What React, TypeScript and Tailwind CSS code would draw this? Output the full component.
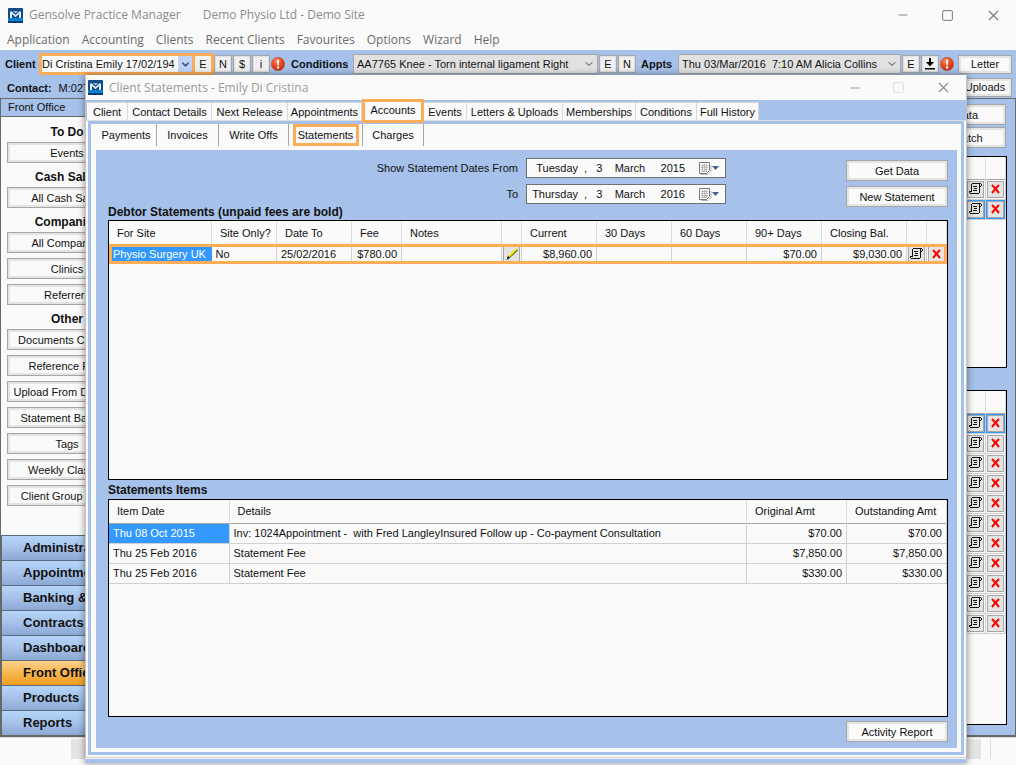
import React from "react";
import { Minus, Square, X, ChevronDown } from "lucide-react";

const Logo = () => (
  <svg width="15" height="15" viewBox="0 0 15 15" className="shrink-0" aria-hidden="true">
    <rect width="15" height="15" rx="1" fill="#0f4c86" />
    <rect y="10" width="15" height="5" rx="1" fill="#0a7fd0" />
    <rect y="13" width="15" height="2" fill="#083a70" />
    <path d="M2 10V4.5Q2 3 3.5 3.2L7.5 7l4-3.8Q13 3 13 4.5V10h-2V6L7.5 9.2 4 6v4z" fill="#e0effa" />
    <path d="M5 3h5L7.5 5.6z" fill="#8fc3e8" />
  </svg>
);

const Alert = () => (
  <svg width="14" height="14" viewBox="0 0 14 14" className="shrink-0" aria-hidden="true">
    <defs>
      <radialGradient id="alertFill" cx="0.4" cy="0.3" r="0.8">
        <stop offset="0" stopColor="#ff8a5c" />
        <stop offset="0.5" stopColor="#e8451c" />
        <stop offset="1" stopColor="#b82508" />
      </radialGradient>
    </defs>
    <circle cx="7" cy="7" r="6.7" fill="url(#alertFill)" stroke="#b9624a" strokeWidth="0.6" />
    <path d="M6 2.5h2.2L7.8 8.3H6.4z" fill="#fff" />
    <circle cx="7.1" cy="10.5" r="1.2" fill="#fff" />
  </svg>
);

const ScrollIcon = () => (
  <svg width="13" height="12" viewBox="0 0 13 12" className="shrink-0" shapeRendering="crispEdges" aria-hidden="true">
    <path
      d="M3 0h9v1h-9zM2 1h1v7h-1zM12 1h1v2h-1zM10 1h1v9h-1zM11 3h1v1h-1zM0 8h3v1h-3zM0 9h1v1h-1zM1 10h9v1h-9zM4 3h4v1h-4zM5 5h3v1h-3zM4 7h4v1h-4z"
      fill="#111"
    />
  </svg>
);

const RedX = () => (
  <svg width="9" height="10" viewBox="0 0 9 10" aria-hidden="true">
    <path d="M1 1l3.5 3.7L8 1M1 9l3.5-4.3L8 9" fill="none" stroke="#f00" strokeWidth="2" />
  </svg>
);

const Pencil = () => (
  <svg width="12" height="12" viewBox="0 0 12 12" aria-hidden="true">
    <path d="M1.5 10.5L11 1.5" stroke="#222" strokeWidth="2.4" />
    <path d="M3 8.5L10.5 1" stroke="#f4f000" strokeWidth="2" />
    <path d="M0.5 11.5l2-1" stroke="#222" strokeWidth="1" />
  </svg>
);

const Calendar = () => (
  <svg width="20" height="13" viewBox="0 0 20 13" aria-hidden="true">
    <path d="M2 12.5h7l3-3V3" fill="none" stroke="#b5b5b5" strokeWidth="1" />
    <path d="M.5.5h10v8l-3 3h-7z" fill="#fff" stroke="#777" strokeWidth="1" />
    <path d="M2 3.5h7M2 5.5h7M2 7.5h7M2 9.5h5M3.5 2v8M5.5 2v8M7.5 2v8" stroke="#b9b9b9" strokeWidth="1" />
    <path d="M13 4h7l-3.5 4z" fill="#43618f" />
  </svg>
);

function Btn({ children, className = "" }: { children: React.ReactNode; className?: string }) {
  return (
    <button
      className={`shrink-0 overflow-hidden whitespace-nowrap border border-[#a6a6a6] bg-[#fafafa] text-center text-[11px] leading-3 shadow-[inset_0_0_0_2px_#e4e4e4] ${className}`}
    >
      {children}
    </button>
  );
}

function Mini({ children, label }: { children: React.ReactNode; label?: string }) {
  return (
    <button
      aria-label={label}
      className="flex h-[18px] w-[18px] shrink-0 items-center justify-center border border-[#a6a6a6] bg-[#f0f0f0] text-[11px] shadow-[inset_0_0_0_1px_#e0e0e0]"
    >
      {children}
    </button>
  );
}

function IconButton({ children, label }: { children: React.ReactNode; label: string }) {
  return (
    <button
      aria-label={label}
      className="mx-auto flex h-[17px] w-[17px] items-center justify-center border border-[#a6a6a6] bg-[#e4e4e4]"
    >
      {children}
    </button>
  );
}

function GreySelect({ id, value, className }: { id: string; value: string; className: string }) {
  return (
    <div className={`relative h-5 ${className}`}>
      <select
        id={id}
        className="h-full w-full appearance-none border border-[#a6a6a6] bg-[#e1e1e1] pl-[3px] text-[11px] outline-none"
      >
        <option>{value}</option>
      </select>
      <ChevronDown size={12} strokeWidth={2} className="pointer-events-none absolute right-[3px] top-1 text-[#444]" />
    </div>
  );
}

const sideGroups = [
  { title: "To Do", items: ["Events"] },
  { title: "Cash Sales", items: ["All Cash Sales"] },
  { title: "Companies", items: ["All Companies", "Clinics", "Referrers"] },
  {
    title: "Other",
    items: [
      "Documents Created",
      "Reference Files",
      "Upload From Desktop",
      "Statement Batches",
      "Tags",
      "Weekly Classes",
      "Client Group Class",
    ],
  },
];

const sections = [
  "Administration",
  "Appointments",
  "Banking & Fees",
  "Contracts",
  "Dashboards",
  "Front Office",
  "Products",
  "Reports",
];

function SideGrid({ rows, selected, className }: { rows: number; selected: number; className: string }) {
  return (
    <div className={`ml-auto mr-2 w-[140px] border border-black bg-[#fafafa] ${className}`}>
      <table className="w-full table-fixed border-collapse">
        <colgroup>
          <col />
          <col className="w-5" />
          <col className="w-5" />
        </colgroup>
        <thead>
          <tr className="h-[22px] border-b border-[#a6a6a6]">
            <th />
            <th className="border-r border-[#dcdcdc]" />
            <th className="border-r border-[#dcdcdc]" />
          </tr>
        </thead>
        <tbody>
          {Array.from({ length: rows }, (_, i) => (
            <tr key={i} className="h-5 border-b border-[#d0d0d0]">
              <td />
              <td className={`border-r border-[#d0d0d0] p-0 ${i === selected ? "bg-[#3399ff]" : ""}`}>
                <IconButton label="View">
                  <ScrollIcon />
                </IconButton>
              </td>
              <td className={`border-r border-[#d0d0d0] p-0 ${i === selected ? "bg-[#3399ff]" : ""}`}>
                <IconButton label="Delete">
                  <RedX />
                </IconButton>
              </td>
            </tr>
          ))}
        </tbody>
      </table>
    </div>
  );
}

const tabs = [
  { name: "Client", w: "w-[41px]" },
  { name: "Contact Details", w: "w-[84px]" },
  { name: "Next Release", w: "w-[76px]" },
  { name: "Appointments", w: "w-[74px]" },
  { name: "Accounts", w: "w-[62px]" },
  { name: "Events", w: "w-[43px]" },
  { name: "Letters & Uploads", w: "w-[96px]" },
  { name: "Memberships", w: "w-[73px]" },
  { name: "Conditions", w: "w-[61px]" },
  { name: "Full History", w: "w-[62px]" },
];

const subTabs = [
  { name: "Payments", w: "w-[61px]" },
  { name: "Invoices", w: "w-[62px]" },
  { name: "Write Offs", w: "w-[70px]" },
  { name: "Statements", w: "w-[74px]" },
  { name: "Charges", w: "w-[61px]" },
];

const items = [
  ["Thu 08 Oct 2015", "Inv: 1024Appointment -  with Fred LangleyInsured Follow up - Co-payment Consultation", "$70.00", "$70.00"],
  ["Thu 25 Feb 2016", "Statement Fee", "$7,850.00", "$7,850.00"],
  ["Thu 25 Feb 2016", "Statement Fee", "$330.00", "$330.00"],
];

function DateField({ id, label, value }: { id: string; label: string; value: string }) {
  return (
    <div className="flex items-center justify-end gap-2">
      <label htmlFor={id}>{label}</label>
      <div className="flex h-5 w-[200px] items-center border border-[#707070] bg-[#fafafa] pr-[6px]">
        <input id={id} defaultValue={value} className="w-[158px] bg-transparent text-right text-[11px] outline-none" />
        <button aria-label="Open calendar" className="ml-auto">
          <Calendar />
        </button>
      </div>
    </div>
  );
}

const headCell = "border-r border-[#dcdcdc] pl-2 text-left font-normal";
const cell = "border-r border-[#d0d0d0] px-1";

function StatementsDialog() {
  return (
    <section className="absolute bottom-[2px] left-[85px] right-[49px] top-[75px] flex flex-col border-l border-r border-[#c4c4c4] bg-[#fafafa] shadow-[0_0_7px_rgba(0,0,0,0.45)]">
      <header className="flex h-[25px] shrink-0 items-center pl-[2px] pr-[14px] font-['Open_Sans',sans-serif] text-[12px] text-[#9a9a9a]">
        <Logo />
        <h2 className="pl-1.5">Client Statements - Emily Di Cristina</h2>
        <div className="ml-auto flex items-center gap-[30px] text-[#888]">
          <button aria-label="Minimise"><Minus size={14} strokeWidth={1.5} /></button>
          <button aria-label="Maximise" className="text-[#ddd]"><Square size={13} strokeWidth={1.8} /></button>
          <button aria-label="Close"><X size={17} strokeWidth={1.5} /></button>
        </div>
      </header>
      <nav className="flex h-5 shrink-0 items-end bg-[#a6c1ea] pl-px">
        {tabs.map((t) =>
          t.name === "Accounts" ? (
            <button
              key={t.name}
              className={`relative z-10 -mb-[3px] h-6 shrink-0 whitespace-nowrap border-[3px] border-[#fdac58] bg-[#fafafa] pb-0.5 ${t.w}`}
            >
              {t.name}
            </button>
          ) : (
            <button key={t.name} className={`h-[18px] shrink-0 whitespace-nowrap border-r border-t border-[#d8d8d8] bg-[#fafafa] ${t.w}`}>
              {t.name}
            </button>
          ),
        )}
      </nav>
      <div className="flex flex-1 flex-col border-t border-[#dcdcdc] px-[2px] pb-[2px]">
        <div className="flex flex-1 flex-col border-[3px] border-[#a6c1ea] pb-1 pl-[5px] pr-1">
          <nav className="flex h-[22px] shrink-0">
            {subTabs.map((t) => (
              <div key={t.name} className={`flex h-[22px] shrink-0 items-center justify-center border-r border-[#a6a6a6] ${t.w}`}>
                <button
                  className={
                    t.name === "Statements"
                      ? "h-[22px] w-[66px] whitespace-nowrap border-[3px] border-[#fdac58]"
                      : "whitespace-nowrap"
                  }
                >
                  {t.name}
                </button>
              </div>
            ))}
          </nav>
          <div className="mt-1 flex flex-1 flex-col bg-[#a6c1ea] pb-[6px] pl-3 pr-[9px] pt-2">
            <div className="flex justify-end">
              <div className="flex flex-col gap-1.5">
                <DateField id="from" label="Show Statement Dates From" value="Tuesday  ,   3    March     2015" />
                <DateField id="to" label="To" value="Thursday  ,   3    March     2016" />
              </div>
              <div className="ml-[120px] mt-0.5 flex flex-col gap-[5px]">
                <Btn className="h-[21px] w-[102px]">Get Data</Btn>
                <Btn className="h-[21px] w-[102px]">New Statement</Btn>
              </div>
            </div>
            <h3 className="mt-[-1px] h-[14px] text-[12px] font-bold leading-3">Debtor Statements (unpaid fees are bold)</h3>
            <div className="h-[260px] border border-black bg-[#fafafa]">
              <table className="w-full table-fixed border-collapse whitespace-nowrap">
                <colgroup>
                  <col />
                  <col className="w-[65px]" />
                  <col className="w-[75px]" />
                  <col className="w-[50px]" />
                  <col className="w-[100px]" />
                  <col className="w-5" />
                  <col className="w-[75px]" />
                  <col className="w-[75px]" />
                  <col className="w-[75px]" />
                  <col className="w-[75px]" />
                  <col className="w-[85px]" />
                  <col className="w-5" />
                  <col className="w-5" />
                </colgroup>
                <thead>
                  <tr className="h-[23px]">
                    {["For Site", "Site Only?", "Date To", "Fee", "Notes", "", "Current", "30 Days", "60 Days", "90+ Days", "Closing Bal.", "", ""].map(
                      (h, i) => (
                        <th key={i} className={`${headCell} pr-0`}>{h}</th>
                      ),
                    )}
                  </tr>
                </thead>
                <tbody>
                  <tr className="h-5 outline-3 -outline-offset-3 outline-[#fdac58]">
                    <td className="bg-[#3399ff] bg-clip-padding px-1 text-white">Physio Surgery UK</td>
                    <td className={cell}>No</td>
                    <td className={cell}>25/02/2016</td>
                    <td className={`${cell} text-right`}>$780.00</td>
                    <td className={cell} />
                    <td className="border-r border-[#d0d0d0] p-0">
                      <IconButton label="Edit note"><Pencil /></IconButton>
                    </td>
                    <td className={`${cell} text-right`}>$8,960.00</td>
                    <td className={cell} />
                    <td className={cell} />
                    <td className={`${cell} text-right`}>$70.00</td>
                    <td className={`${cell} text-right`}>$9,030.00</td>
                    <td className="border-r border-[#d0d0d0] p-0">
                      <IconButton label="View"><ScrollIcon /></IconButton>
                    </td>
                    <td className="p-0">
                      <IconButton label="Delete"><RedX /></IconButton>
                    </td>
                  </tr>
                </tbody>
              </table>
            </div>
            <h3 className="h-[19px] pt-[3px] text-[12px] font-bold leading-[14px]">Statements Items</h3>
            <div className="flex-1 border border-black bg-[#fafafa]">
              <table className="w-full table-fixed border-collapse whitespace-nowrap">
                <colgroup>
                  <col className="w-[120px]" />
                  <col />
                  <col className="w-[100px]" />
                  <col className="w-[100px]" />
                </colgroup>
                <thead>
                  <tr className="h-[23px] border-b border-[#a6a6a6]">
                    {["Item Date", "Details", "Original Amt", "Outstanding Amt"].map((h) => (
                      <th key={h} className={`${headCell} pr-0`}>{h}</th>
                    ))}
                  </tr>
                </thead>
                <tbody>
                  {items.map((r, i) => (
                    <tr key={i} className="h-5 border-b border-[#d0d0d0]">
                      <td className={`${cell} ${i === 0 ? "bg-[#3399ff] text-white" : ""}`}>{r[0]}</td>
                      <td className={`${cell} whitespace-pre`}>{r[1]}</td>
                      <td className={`${cell} text-right`}>{r[2]}</td>
                      <td className={`${cell} text-right`}>{r[3]}</td>
                    </tr>
                  ))}
                </tbody>
              </table>
            </div>
            <div className="flex justify-end pt-1">
              <Btn className="h-[21px] w-[102px]">Activity Report</Btn>
            </div>
          </div>
        </div>
      </div>
      <div className="h-[6px] shrink-0 border-b-4 border-t border-b-[#a6c1ea] border-t-[#d0d0d0]" />
    </section>
  );
}

export default function App() {
  return (
    <div className="relative flex min-h-screen flex-col overflow-hidden bg-[#fafafa] font-['Liberation_Sans',Arial,sans-serif] text-[11px] leading-[14px] text-[#111]">
      <header className="flex h-[30px] items-center pl-2 pr-[14px] font-['Open_Sans',sans-serif] text-[12px] text-[#8c8c8c]">
        <Logo />
        <h1 className="whitespace-pre pl-1.5">Gensolve Practice Manager</h1>
        <span className="pl-[22px]">Demo Physio Ltd - Demo Site</span>
        <div className="ml-auto flex items-center gap-[31px] text-[#777]">
          <button aria-label="Minimise"><Minus size={14} strokeWidth={1.5} /></button>
          <button aria-label="Maximise"><Square size={13} strokeWidth={1.8} /></button>
          <button aria-label="Close"><X size={17} strokeWidth={1.5} /></button>
        </div>
      </header>
      <nav className="flex h-5 items-center gap-3 pl-[7px] font-['Open_Sans',sans-serif] text-[12px] text-[#6a6a6a]">
        {["Application", "Accounting", "Clients", "Recent Clients", "Favourites", "Options", "Wizard", "Help"].map((m) => (
          <button key={m} className="whitespace-nowrap">{m}</button>
        ))}
      </nav>

      <div className="flex h-[28px] items-center bg-[#a6c1ea] pl-[5px] pr-1">
        <label htmlFor="client" className="w-[34px] shrink-0 font-bold">Client</label>
        <div className="relative h-[22px] w-[156px] shrink-0 border-[3px] border-[#fdac58] bg-[#fafafa]">
          <select id="client" className="h-full w-full appearance-none bg-transparent text-[11px] outline-none">
            <option>Di Cristina Emily 17/02/194</option>
          </select>
          <span className="pointer-events-none absolute right-0 top-0 flex h-4 w-[14px] items-center justify-center bg-[#c3d3f7]">
            <ChevronDown size={11} strokeWidth={4} className="text-[#43608f]" />
          </span>
        </div>
        <button className="h-[22px] w-[19px] shrink-0 border-[3px] border-l-0 border-[#fdac58] bg-[#f0f0f0]">E</button>
        <div className="flex items-center gap-px">
          <Mini>N</Mini>
          <Mini>$</Mini>
          <Mini>i</Mini>
          <Alert />
        </div>
        <label htmlFor="conditions" className="ml-1.5 w-[62px] shrink-0 font-bold">Conditions</label>
        <GreySelect id="conditions" className="w-[245px] shrink-0" value="AA7765 Knee - Torn internal ligament Right" />
        <div className="flex items-center gap-px pl-px">
          <Mini>E</Mini>
          <Mini>N</Mini>
        </div>
        <label htmlFor="appts" className="ml-[5px] w-[37px] shrink-0 font-bold">Appts</label>
        <GreySelect id="appts" className="min-w-0 flex-1" value={"Thu 03/Mar/2016\u00a0 7:10 AM Alicia Collins"} />
        <div className="flex items-center gap-px pl-px pr-1">
          <Mini>E</Mini>
          <Mini label="Download">
            <svg width="12" height="12" viewBox="0 0 12 12" aria-hidden="true">
              <path d="M5 0h2v4h3L6 8.5 2 4h3zM1 10h10v1.5H1z" fill="#000" />
            </svg>
          </Mini>
          <Alert />
        </div>
        <Btn className="h-[19px] w-[54px]">Letter</Btn>
      </div>
      <div className="flex h-5 items-center bg-[#a6c1ea] pl-[7px] pr-1">
        <span className="font-bold">Contact:</span>
        <span className="pl-[7px]">M:027</span>
        <Btn className="mb-0.5 ml-auto h-[19px] w-[54px]">Uploads</Btn>
      </div>

      <main className="flex flex-1 border border-b-2 border-[#686868] bg-[#a6c1ea]">
        <aside className="flex w-[132px] shrink-0 flex-col bg-[#fafafa]">
          <h2 className="h-[18px] border-b border-[#686868] bg-[#a6c1ea] pl-[7px] pt-px">Front Office</h2>
          <div className="flex flex-col px-1.5 pt-[6px]">
            {sideGroups.map((g) => (
              <div key={g.title} className="flex flex-col gap-[5px] pb-[5px]">
                <h3 className="-mb-[4px] h-[18px] pt-[2px] text-center text-[12px] font-bold">{g.title}</h3>
                {g.items.map((it) => (
                  <Btn key={it} className="h-[21px]">{it}</Btn>
                ))}
              </div>
            ))}
          </div>
          <nav className="mt-auto flex flex-col border-l border-[#686868]">
            {sections.map((s) => (
              <button
                key={s}
                className={`h-[25px] overflow-hidden whitespace-nowrap border-t border-[#5c6b85] pl-[21px] text-left text-[13px] font-bold ${
                  s === "Front Office"
                    ? "bg-linear-to-b from-[#fbd28a] via-[#f7b64c] to-[#f09d1c]"
                    : "bg-linear-to-b from-[#b5d6f8] via-[#a6c1ea] to-[#8ba9d3]"
                }`}
              >
                {s}
              </button>
            ))}
          </nav>
        </aside>
        <div className="flex flex-1 flex-col pb-[10px] pt-[5px]">
          <div className="flex flex-col items-end gap-[2px] pr-[9px]">
            <Btn className="h-[21px] w-[100px]">Get Data</Btn>
            <Btn className="h-[21px] w-[100px]">New Batch</Btn>
          </div>
          <SideGrid rows={2} selected={1} className="mt-2 h-[212px]" />
          <SideGrid rows={11} selected={0} className="mt-[22px] flex-1" />
        </div>
      </main>
      <footer className="flex h-7 shrink-0 border-t border-[#dcdcdc] pt-px">
        <span className="ml-[71px] h-5 w-[14px] bg-[#e4e4e4]" />
        <span className="ml-auto h-5 w-[60px] bg-[#e4e4e4]" />
        <span className="mr-[25px] h-5 w-[10px] border-r border-[#dcdcdc]" />
      </footer>

      <StatementsDialog />
    </div>
  );
}
